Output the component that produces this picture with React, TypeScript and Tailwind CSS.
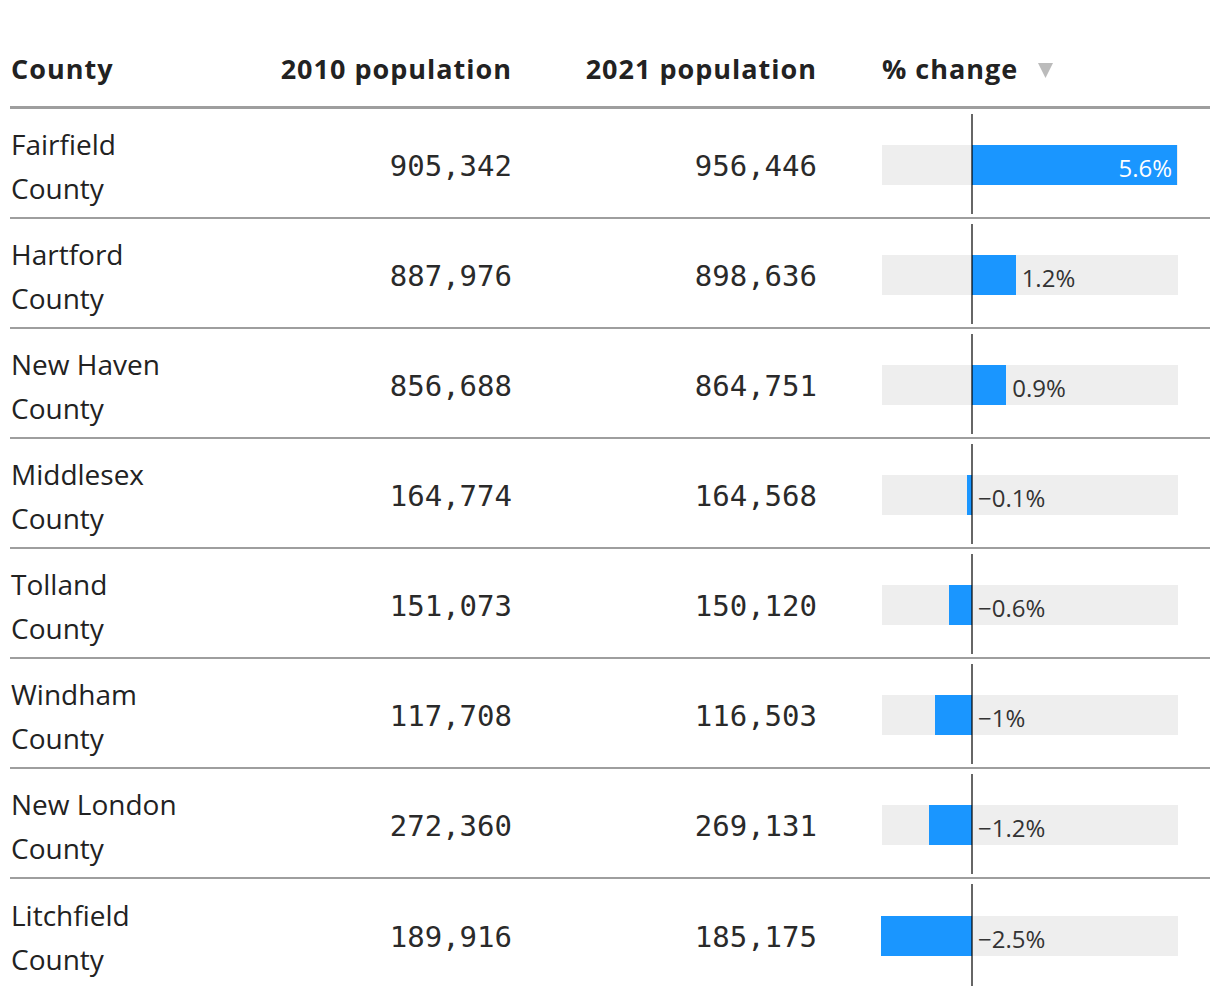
const rows = [
  { name: 'Fairfield', p2010: '905,342', p2021: '956,446', change: 5.645, label: '5.6%' },
  { name: 'Hartford', p2010: '887,976', p2021: '898,636', change: 1.2, label: '1.2%' },
  { name: 'New Haven', p2010: '856,688', p2021: '864,751', change: 0.94, label: '0.9%' },
  { name: 'Middlesex', p2010: '164,774', p2021: '164,568', change: -0.125, label: '−0.1%' },
  { name: 'Tolland', p2010: '151,073', p2021: '150,120', change: -0.631, label: '−0.6%' },
  { name: 'Windham', p2010: '117,708', p2021: '116,503', change: -1.024, label: '−1%' },
  { name: 'New London', p2010: '272,360', p2021: '269,131', change: -1.186, label: '−1.2%' },
  { name: 'Litchfield', p2010: '189,916', p2021: '185,175', change: -2.496, label: '−2.5%' },
];

// px per percentage point, zero sits 90px into the 296px track
const SCALE = 36.36;
const ZERO = 90;

function ChangeBar({ change, label }: { change: number; label: string }) {
  const w = Math.abs(change) * SCALE;
  const inside = change > 4;
  const left = change >= 0 ? ZERO : ZERO - w;
  const labelLeft = change >= 0 ? ZERO + w + 6 : ZERO + 6;
  return (
    <div className="relative h-full pl-[65px] flex items-center">
      <div className="relative w-[296px] h-[40px] mt-[4px] bg-[#eeeeee]">
        <div className="absolute top-0 h-full bg-[#1a96ff]" style={{ left, width: w }} />
        {inside ? (
          <span className="absolute right-[6px] top-0 h-full pt-[6px] flex items-center text-[24px] text-white">
            {label}
          </span>
        ) : (
          <span
            className="absolute top-0 h-full pt-[6px] flex items-center text-[24px] text-[#333]"
            style={{ left: labelLeft }}
          >
            {label}
          </span>
        )}
      </div>
      <div className="absolute left-[154px] top-[5px] bottom-[3px] w-[2px] bg-black/60" />
    </div>
  );
}

export default function App() {
  return (
    <div className="bg-white min-h-screen pl-[10px] pr-[10px] font-['Open_Sans',sans-serif] text-[#222]">
      <div className="w-[1200px]">
        <div className="grid grid-cols-[229px_273px_305px_1fr] h-[109px] items-end pb-[21px] border-b-[3px] border-[#9e9e9e] text-[27px] font-bold leading-[32px] tracking-[1px] text-[#222]">
          <div className="pl-[1px]">County</div>
          <div className="text-right">2010 population</div>
          <div className="text-right">2021 population</div>
          <div className="pl-[65px] flex items-center gap-[20px]">
            <span>% change</span>
            <svg width="15" height="15" viewBox="0 0 15 15" className="mt-[2px]">
              <path d="M0 0 L15 0 L7.5 15 Z" fill="#bbbbbb" />
            </svg>
          </div>
        </div>
        {rows.map((r, i) => (
          <div
            key={r.name}
            className={`grid grid-cols-[229px_273px_305px_1fr] h-[110px] items-center ${
              i < rows.length - 1 ? 'border-b-2 border-[#9e9e9e]' : ''
            }`}
          >
            <div className="pl-[1px] pt-[5px] text-[28px] leading-[44px] text-[#222]">
              {r.name}
              <br />
              County
            </div>
            <div className="pt-[8px] text-right font-['DejaVu_Sans_Mono',monospace] text-[29px] text-[#2a2a2a]">
              {r.p2010}
            </div>
            <div className="pt-[8px] text-right font-['DejaVu_Sans_Mono',monospace] text-[29px] text-[#2a2a2a]">
              {r.p2021}
            </div>
            <ChangeBar change={r.change} label={r.label} />
          </div>
        ))}
      </div>
    </div>
  );
}
